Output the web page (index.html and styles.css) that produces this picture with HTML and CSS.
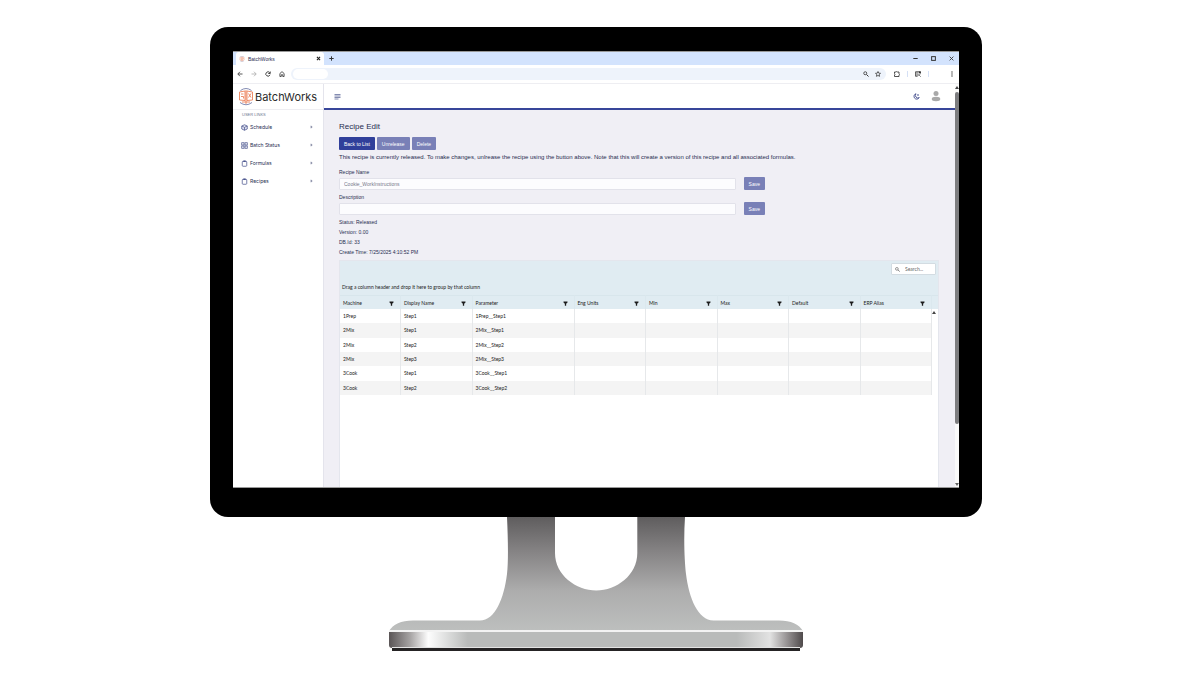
FILE: index.html
```
<!DOCTYPE html>
<html lang="en">
<head>
    <meta charset="UTF-8">
    <meta name="viewport" content="width=device-width, initial-scale=1.0">
    <title>BatchWorks</title>
    <link rel="stylesheet" href="styles.css">
</head>
<body>

    <!-- Shared icons -->
    <svg class="sprite" aria-hidden="true">
        <symbol id="filter" viewBox="0 0 10 10"><path d="M1 1h8v2L6.300 5.500V9.500H3.700V5.500L1 3z" fill="#1c1c1c"/></symbol>
        <symbol id="clipboard" viewBox="0 0 12 14"><rect x="1.500" y="2.500" width="9" height="10" rx="1.500" fill="none" stroke="#4c568f" stroke-width="1.500"/><rect x="3.500" y="1" width="5" height="3" rx="1" fill="#4c568f"/></symbol>
        <symbol id="logo" viewBox="0 0 32 36">
            <g fill="none" stroke="#ea7a50" stroke-width="1.700">
                <path d="M3 8l11-2v19L3 24zM29 8L18 6v19l11-1z"/>
                <path d="M16 4v28M6 12h5M6 17h5v4M21 11l5 8M26 11l-5 8M8 28h16"/>
            </g>
            <path d="M5 5Q16-3 27 5M4 29q12 9 24 0" fill="none" stroke="#5b6699" stroke-width="1.500"/>
        </symbol>
    </svg>

    <div class="monitor">
        <div class="screen">

            <!-- Browser window -->
            <div class="tabs">
                <div class="tab">
                    <svg class="favicon" aria-hidden="true"><use href="#logo"/></svg>
                    <span>BatchWorks</span>
                    <button class="plain" aria-label="Close tab"><svg viewBox="0 0 8 8"><path d="M1.500 1.500l5 5M6.500 1.500l-5 5" stroke="#222" stroke-width="1.800"/></svg></button>
                </div>
                <button class="plain new-tab" aria-label="New tab"><svg viewBox="0 0 8 8"><path d="M4 0.500v7M0.500 4h7" stroke="#333" stroke-width="1.600"/></svg></button>
                <div class="window-buttons">
                    <button class="plain" aria-label="Minimize"><svg viewBox="0 0 8 8"><path d="M0.500 4h7" stroke="#333" stroke-width="1.600"/></svg></button>
                    <button class="plain" aria-label="Maximize"><svg viewBox="0 0 8 8"><rect x="1" y="1" width="6" height="6" fill="none" stroke="#333" stroke-width="1.600"/></svg></button>
                    <button class="plain" aria-label="Close"><svg viewBox="0 0 8 8"><path d="M1 1l6 6M7 1L1 7" stroke="#333" stroke-width="1.400"/></svg></button>
                </div>
            </div>
            <div class="toolbar">
                <div class="nav-buttons">
                    <button class="plain" aria-label="Back"><svg viewBox="0 0 12 12"><path d="M11 6H2M6 1.500L1.500 6 6 10.500" fill="none" stroke="#444" stroke-width="1.800"/></svg></button>
                    <button class="plain" aria-label="Forward"><svg viewBox="0 0 12 12"><path d="M1 6h9M6 1.500L10.500 6 6 10.500" fill="none" stroke="#aaa" stroke-width="1.600"/></svg></button>
                    <button class="plain" aria-label="Reload"><svg viewBox="0 0 12 12"><path d="M10 7.500A4.300 4.300 0 1 1 9.500 3.500M10.500 1v4h-4" fill="none" stroke="#333" stroke-width="1.800"/></svg></button>
                    <button class="plain" aria-label="Home"><svg viewBox="0 0 12 12"><path d="M1.800 5L6 1.300 10.200 5v6H7.500V7.500h-3V11H1.800z" fill="none" stroke="#333" stroke-width="1.600"/></svg></button>
                </div>
                <div class="address">
                    <input type="text" aria-label="Address">
                    <button class="plain" aria-label="Zoom"><svg viewBox="0 0 12 12"><circle cx="4.500" cy="4.500" r="3" fill="none" stroke="#333" stroke-width="1.600"/><path d="M7 7l4 4" stroke="#333" stroke-width="2"/></svg></button>
                    <button class="plain" aria-label="Bookmark"><svg viewBox="0 0 12 12"><path d="M6 1l1.500 3.300 3.500.4-2.600 2.400.7 3.600L6 8.900l-3.100 1.800.7-3.600L1 4.700l3.500-.4z" fill="none" stroke="#333" stroke-width="1.500"/></svg></button>
                </div>
                <div class="extensions">
                    <button class="plain" aria-label="Extensions"><svg viewBox="0 0 12 12"><path d="M1 2h3q1.500-2 3 0h3v3q2.500 1.500 0 3v3H1V8q2-1.500 0-3z" fill="none" stroke="#333" stroke-width="1.700"/></svg></button>
                    <span class="divider"></span>
                    <button class="plain" aria-label="Side search"><svg viewBox="0 0 12 12"><path d="M5 10.500H1v-9h10V5M4 1.500v9" fill="none" stroke="#333" stroke-width="1.500"/><path d="M7.500 1h4v3.500h-4z" fill="#333"/><circle cx="8" cy="7.500" r="1.700" fill="none" stroke="#333"/><path d="M9 9l2.500 2.500" stroke="#333" stroke-width="1.300"/></svg></button>
                    <span class="divider"></span>
                </div>
                <button class="plain" aria-label="Menu"><svg viewBox="0 0 12 12" fill="#333"><circle cx="6" cy="2" r="1.300"/><circle cx="6" cy="6" r="1.300"/><circle cx="6" cy="10" r="1.300"/></svg></button>
            </div>

            <!-- Application -->
            <div class="app">
                <aside class="sidebar">
                    <a class="brand" href="#"><svg aria-hidden="true"><use href="#logo"/></svg>BatchWorks</a>
                    <h2>USER LINKS</h2>
                    <nav>
                        <a href="#"><svg viewBox="0 0 14 14"><path d="M7 1.500l5.500 2.500v6L7 12.500 1.500 10V4zM1.500 4L7 6.500 12.500 4M7 6.500v6" fill="#dfe2f2" stroke="#4c568f" stroke-width="1.500"/></svg>Schedule<i></i></a>
                        <a href="#"><svg viewBox="0 0 14 14"><g fill="none" stroke="#4c568f" stroke-width="1.500"><rect x="1.500" y="1.500" width="4.500" height="4.500"/><rect x="8" y="1.500" width="4.500" height="4.500"/><rect x="1.500" y="8" width="4.500" height="4.500"/><rect x="8" y="8" width="4.500" height="4.500"/></g></svg>Batch Status<i></i></a>
                        <a href="#"><svg><use href="#clipboard"/></svg>Formulas<i></i></a>
                        <a href="#"><svg><use href="#clipboard"/></svg>Recipes<i></i></a>
                    </nav>
                </aside>

                <main>
                    <header>
                        <button class="plain" aria-label="Toggle menu"><svg viewBox="0 0 14 14"><path d="M1 3h12M1 6h12M1 9h12M1 12h8" stroke="#5a6496" stroke-width="1.500"/></svg></button>
                        <button class="plain moon" aria-label="Dark mode"><svg viewBox="0 0 14 14"><path d="M6 1.500A5.500 5.500 0 1 0 12.500 9 5 5 0 0 1 6 1.500z" fill="none" stroke="#2e3a80" stroke-width="1.600"/><path d="M10 2v4M8 4h4" stroke="#2e3a80"/></svg></button>
                        <button class="plain avatar" aria-label="Account"><svg viewBox="0 0 20 24" fill="#a9a9a9"><circle cx="10" cy="7" r="5"/><ellipse cx="10" cy="18" rx="8.500" ry="4.500"/></svg></button>
                    </header>

                    <div class="content">
                        <h1>Recipe Edit</h1>
                        <div class="actions">
                            <button class="btn primary">Back to List</button>
                            <button class="btn">Unrelease</button>
                            <button class="btn">Delete</button>
                        </div>
                        <p class="notice">This recipe is currently released. To make changes, unlrease the recipe using the button above. Note that this will create a version of this recipe and all associated formulas.</p>

                        <div class="field">
                            <label for="recipeName">Recipe Name</label>
                            <div class="field-row">
                                <input type="text" id="recipeName" value="Cookie_WorkInstructions">
                                <button class="btn">Save</button>
                            </div>
                        </div>
                        <div class="field">
                            <label for="description">Description</label>
                            <div class="field-row">
                                <input type="text" id="description">
                                <button class="btn">Save</button>
                            </div>
                        </div>

                        <div class="details">
                            <p>Status: Released</p>
                            <p>Version: 0.00</p>
                            <p>DB.Id: 33</p>
                            <p>Create Time: 7/25/2025 4:10:52 PM</p>
                        </div>

                        <div class="grid">
                            <div class="grid-top">
                                <label class="search">
                                    <svg viewBox="0 0 12 12"><circle cx="4.500" cy="4.500" r="3.300" fill="none" stroke="#444" stroke-width="1.300"/><path d="M7 7l4.500 4" stroke="#444" stroke-width="1.500"/></svg>
                                    <input type="text" placeholder="Search..." aria-label="Search">
                                </label>
                                <p>Drag a column header and drop it here to group by that column</p>
                            </div>
                            <table>
                                <colgroup>
                                    <col class="narrow"><col><col class="wide"><col><col><col><col><col><col class="scroll">
                                </colgroup>
                                <thead>
                                    <tr>
                                        <th>Machine<svg><use href="#filter"/></svg></th>
                                        <th>Display Name<svg><use href="#filter"/></svg></th>
                                        <th>Parameter<svg><use href="#filter"/></svg></th>
                                        <th>Eng Units<svg><use href="#filter"/></svg></th>
                                        <th>Min<svg><use href="#filter"/></svg></th>
                                        <th>Max<svg><use href="#filter"/></svg></th>
                                        <th>Default<svg><use href="#filter"/></svg></th>
                                        <th>ERP Alias<svg><use href="#filter"/></svg></th>
                                        <td></td>
                                    </tr>
                                </thead>
                                <tbody>
                                    <tr><td>1Prep</td><td>Step1</td><td>1Prep__Step1</td><td></td><td></td><td></td><td></td><td></td><td class="track" rowspan="6"><i class="arrow up"></i></td></tr>
                                    <tr><td>2Mix</td><td>Step1</td><td>2Mix__Step1</td><td></td><td></td><td></td><td></td><td></td></tr>
                                    <tr><td>2Mix</td><td>Step2</td><td>2Mix__Step2</td><td></td><td></td><td></td><td></td><td></td></tr>
                                    <tr><td>2Mix</td><td>Step3</td><td>2Mix__Step3</td><td></td><td></td><td></td><td></td><td></td></tr>
                                    <tr><td>3Cook</td><td>Step1</td><td>3Cook__Step1</td><td></td><td></td><td></td><td></td><td></td></tr>
                                    <tr><td>3Cook</td><td>Step2</td><td>3Cook__Step2</td><td></td><td></td><td></td><td></td><td></td></tr>
                                </tbody>
                            </table>
                        </div>
                    </div>
                </main>

                <div class="scrollbar">
                    <i class="arrow up"></i>
                    <div class="thumb"></div>
                    <i class="arrow down"></i>
                </div>
            </div>
        </div>
    </div>

    <!-- Monitor stand -->
    <svg class="stand" viewBox="0 0 414 134" aria-hidden="true">
        <defs>
            <linearGradient id="neck" x1="0" y1="0" x2="0" y2="1">
                <stop offset="0" stop-color="#5f5d5e"/>
                <stop offset="0.300" stop-color="#858384"/>
                <stop offset="0.650" stop-color="#adadad"/>
                <stop offset="1" stop-color="#bdbfbe"/>
            </linearGradient>
            <linearGradient id="edge">
                <stop offset="0" stop-color="#5a5556"/>
                <stop offset="0.050" stop-color="#a5a2a2"/>
                <stop offset="0.095" stop-color="#fdfdfd"/>
                <stop offset="0.190" stop-color="#b9bbba"/>
                <stop offset="0.840" stop-color="#b9bbba"/>
                <stop offset="0.920" stop-color="#e2e2e2"/>
                <stop offset="0.960" stop-color="#999596"/>
                <stop offset="1" stop-color="#4f4a4b"/>
            </linearGradient>
        </defs>
        <path d="M118 0h48v36c0 22 21 37.500 41.300 37.500S248.300 58 248.300 36V0H296c-1.500 22-.5 44 1 57 3 24 12 46.500 27.500 46.500H390c12 0 20 4 24 10.500H0c4-6.500 12-10.500 24-10.500h67c15 0 24-22 27-46.500 1.500-13 1-35 0-57z" fill="url(#neck)"/>
        <path d="M0 113h414v2H0z" fill="#f3f3f3"/>
        <path d="M3 129h408v5H3z" fill="#252324"/>
        <path d="M0 115h414v13q0 3-3 3H3q-3 0-3-3z" fill="url(#edge)"/>
        <path d="M3 130.500h408" stroke="#e4e4e4"/>
    </svg>

</body>
</html>
```
FILE: styles.css
```
/* General styles */
* {
    box-sizing: border-box;
}
body {
    font-family: "Liberation Sans", Arial, sans-serif;
    font-size: 5px;
    line-height: 10px;
    color: #272d50;
    background-color: #fff;
    margin: 0;
    padding: 27px 218px 0 210px;
}
h1, h2, p {
    margin: 0;
    font-weight: normal;
}
a {
    color: inherit;
    text-decoration: none;
}
svg {
    display: block;
    flex: none;
}
button, input {
    font: inherit;
    color: inherit;
    margin: 0;
    padding: 0;
    border: 0;
}
.sprite {
    display: none;
}
.plain {
    display: block;
    background: none;
}
.plain svg {
    width: 6px;
    height: 6px;
}

/* Monitor */
.monitor {
    background-color: #000;
    border-radius: 18px;
    padding: 24px 23px 29px;
}
.screen {
    background-color: #fff;
    border: 1px solid #999;
    border-width: 1px 0;
}
.stand {
    width: 414px;
    height: 134px;
    margin: 0 auto;
}

/* Browser window */
.tabs {
    display: flex;
    align-items: center;
    height: 13px;
    padding: 0 5px 0 3px;
    background-color: #d3e3fd;
}
.tab {
    display: flex;
    align-items: center;
    gap: 3px;
    width: 88px;
    height: 13px;
    padding: 0 3px;
    border-radius: 3px 3px 0 0;
    background-color: #fff;
}
.favicon {
    width: 6px;
    height: 6px;
}
.tab .plain {
    margin-left: auto;
}
.tabs .plain svg {
    width: 5px;
    height: 5px;
}
.new-tab {
    margin-left: 5px;
}
.window-buttons {
    display: flex;
    gap: 13px;
    margin-left: auto;
}
.toolbar {
    display: flex;
    align-items: center;
    height: 18px;
    padding: 0 4px;
}
.nav-buttons {
    display: flex;
    gap: 8px;
}
.address {
    flex: 1;
    display: flex;
    align-items: center;
    gap: 6px;
    height: 12px;
    margin: 0 8px 0 6px;
    padding: 0 5px 0 2px;
    border-radius: 6px;
    background-color: #eef3fb;
}
.address input {
    width: 35px;
    height: 10px;
    margin-right: auto;
    border-radius: 5px;
    background-color: #fff;
}
.extensions {
    display: flex;
    align-items: center;
    gap: 7px;
    margin-right: 20px;
}
.divider {
    width: 1px;
    height: 6px;
    background-color: #d5e0f5;
}

/* Sidebar */
.app {
    display: flex;
    border-top: 1px solid #eeeef2;
}
.sidebar {
    flex: none;
    width: 91px;
    border-right: 1px solid #e4e4ec;
}
.brand {
    display: flex;
    align-items: center;
    gap: 1px;
    height: 26px;
    padding-left: 5px;
    border-bottom: 1px solid #eeeef2;
    font-family: Inter, sans-serif;
    font-size: 11px;
    color: #2b2b2b;
}
.brand svg {
    width: 16px;
    height: 18px;
}
.sidebar h2 {
    padding: 0 9px;
    font-size: 4px;
    line-height: 9px;
    color: #70758f;
}
nav a {
    display: flex;
    align-items: center;
    gap: 2px;
    height: 18px;
    padding: 0 11px 0 8px;
    font-family: Inter, sans-serif;
}
nav {
    margin-top: -1px;
}
nav svg {
    width: 7px;
    height: 7px;
}
nav i {
    width: 2px;
    height: 2px;
    margin-left: auto;
    border: 1px solid #8a8fa8;
    border-width: 1px 1px 0 0;
    transform: rotate(45deg);
}

/* Main area */
main {
    flex: 1;
    min-width: 0;
    background-color: #f0eff5;
}
header {
    display: flex;
    align-items: center;
    height: 26px;
    padding: 0 14px 0 10px;
    background-color: #fff;
    border-bottom: 2px solid #38469a;
}
header .plain svg {
    width: 7px;
    height: 7px;
}
.moon {
    margin-left: auto;
}
header .avatar {
    margin-left: 11px;
}
header .avatar svg {
    width: 10px;
    height: 12px;
}
.content {
    padding: 11px 16px 0 15px;
}
h1 {
    font-size: 8px;
    line-height: 12px;
}
.actions {
    display: flex;
    gap: 2px;
    margin-top: 4px;
}
.btn {
    height: 13px;
    padding: 0 5px;
    border-radius: 1px;
    background-color: #7980b7;
    color: #fff;
}
.btn.primary {
    background-color: #303f9a;
}
.notice {
    margin: 2px 0 5px;
    font-size: 6px;
    white-space: nowrap;
}
.field {
    margin-bottom: 2px;
}
.field label {
    display: block;
}
.field-row {
    display: flex;
    align-items: center;
    gap: 8px;
    margin-right: 174px;
}
.field-row input {
    flex: 1;
    height: 12px;
    padding: 0 4px;
    border: 1px solid #e2e2ea;
    border-radius: 1px;
    background-color: #fcfcfe;
    color: #77798a;
}
.details {
    margin-bottom: 3px;
}

/* Recipe grid */
.grid {
    min-height: 227px;
    border: 1px solid #e4e6ed;
    border-bottom: 0;
    background-color: #fff;
    font-family: Lato, sans-serif;
    color: #222;
}
.grid-top {
    height: 34px;
    padding: 2px 2px 0;
    background-color: #e0ecf2;
}
.search {
    display: flex;
    align-items: center;
    gap: 5px;
    width: 45px;
    height: 12px;
    margin-left: auto;
    padding: 0 3px;
    border: 1px solid #d3dce2;
    border-radius: 1px;
    background-color: #fff;
}
.search svg {
    width: 5px;
    height: 5px;
}
.search input {
    width: 25px;
    background: none;
}
.search input::placeholder {
    color: #666;
}
.grid-top p {
    margin-top: 7px;
}
table {
    width: 100%;
    height: 100px;
    table-layout: fixed;
    border-collapse: separate;
    border-spacing: 0;
}
col.narrow {
    width: 61px;
}
col.wide {
    width: 102px;
}
col.scroll {
    width: 6px;
}
thead tr {
    height: 14px;
    background-color: #e0ecf2;
}
th, td {
    padding: 0 3px;
    border-right: 1px solid #e6e8ea;
    text-align: left;
    font-weight: normal;
    line-height: 10px;
}
thead th, thead td {
    border-top: 1px solid #d8e6ec;
    border-right-color: #dbe8ee;
}
th svg {
    float: right;
    width: 5px;
    height: 5px;
    margin: 3px 3px 0 0;
}
tbody tr:nth-child(even) td {
    background-color: #f4f4f4;
}
thead td, td.track {
    padding: 0;
    border-right: 0;
}
td.track {
    padding-top: 2px;
    vertical-align: top;
}

/* Scrollbars */
.arrow {
    display: block;
    width: 4px;
    border: 2px solid transparent;
}
.arrow.up {
    border-top: 0;
    border-bottom: 3px solid #444;
}
.arrow.down {
    border-bottom: 0;
    border-top: 3px solid #666;
}
.scrollbar {
    display: flex;
    flex: none;
    flex-direction: column;
    gap: 3px;
    width: 4px;
    padding: 2px 0 1px;
    background-color: #fafafa;
}
.thumb {
    height: 83%;
    margin-bottom: auto;
    border-radius: 2px;
    background-color: #7d7d7f;
}
```
